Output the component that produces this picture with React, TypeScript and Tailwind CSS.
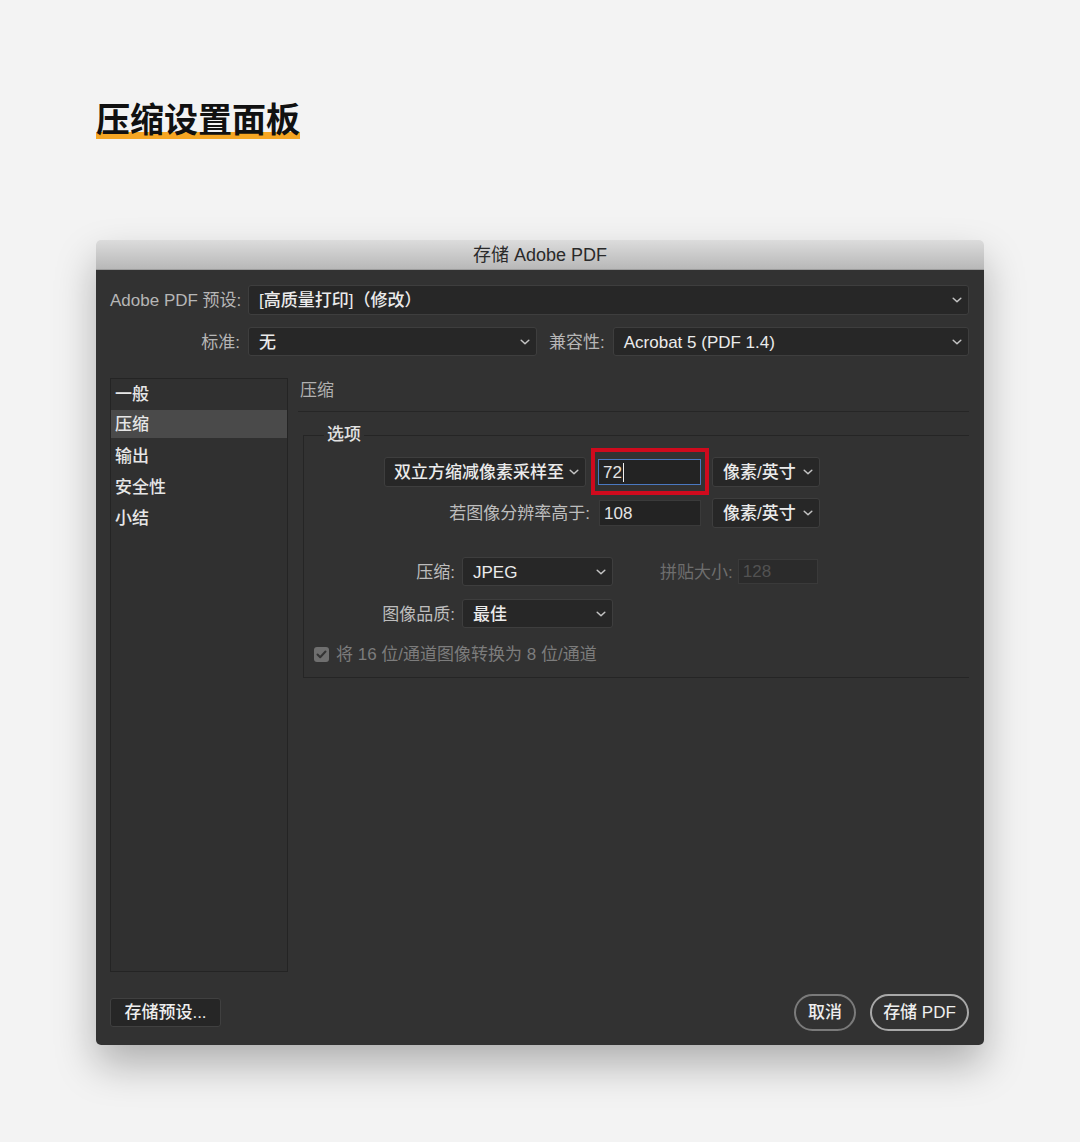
import React from "react";

const FONT = "font-['Liberation_Sans','Noto_Sans_CJK_SC',sans-serif]";

function Chevron() {
  return (
    <svg width="10" height="6" viewBox="0 0 10 6" className="shrink-0">
      <polyline points="1.2,1.2 5,4.8 8.8,1.2" fill="none" stroke="#c4c4c4" strokeWidth="1.5" strokeLinecap="round" strokeLinejoin="round" />
    </svg>
  );
}

function Select({ text, className = "", pl = "pl-[10px]" }: { text: string; className?: string; pl?: string }) {
  return (
    <div className={`flex items-center justify-between bg-[#272727] border border-[#3e3e3e] rounded-[3px] ${pl} pr-[6px] ${className}`}>
      <span className="text-[#ebebeb] font-medium whitespace-nowrap pt-[2px]">{text}</span>
      <Chevron />
    </div>
  );
}

export default function App() {
  return (
    <div className={`min-h-[1142px] w-[1080px] bg-[#f3f3f3] pl-[96px] pt-[98px] ${FONT} text-[17px]`}>
      <div className="h-[40px] leading-[40px]">
        <span className="relative inline-block font-['Noto_Sans_CJK_SC',sans-serif] text-[34px] font-bold text-[#111111]">
          <span className="absolute left-0 right-0 bottom-[-1px] h-[7px] bg-[#f6a623]" />
          <span className="relative">压缩设置面板</span>
        </span>
      </div>

      <div className="mt-[102px] w-[888px] rounded-[5px] overflow-hidden shadow-[0_20px_40px_rgba(0,0,0,0.28)]">
        <div className="h-[30px] leading-[31px] text-center text-[18px] text-[#2a2a2a] bg-[linear-gradient(to_bottom,#dcdcdc,#b8b8b8)] border-b border-[#9c9c9c]">
          存储 Adobe PDF
        </div>

        <div className="bg-[#323232] pl-[14px] pr-[15px] pt-[15px] pb-[14px]">
          <div className="flex items-center h-[30px]">
            <div className="w-[130px] text-right text-[#b6b6b6] whitespace-nowrap pt-[2px]">Adobe PDF 预设:</div>
            <Select text="[高质量打印]（修改）" className="ml-[8px] flex-1 h-[30px]" />
          </div>
          <div className="flex items-center h-[29px] mt-[12px]">
            <div className="w-[130px] text-right text-[#b6b6b6] pt-[2px]">标准:</div>
            <Select text="无" className="ml-[8px] w-[289px] h-[29px]" />
            <div className="ml-[12px] text-[#b6b6b6] whitespace-nowrap pt-[2px]">兼容性:</div>
            <Select text="Acrobat 5 (PDF 1.4)" className="ml-[8px] flex-1 h-[29px]" />
          </div>

          <div className="flex mt-[22px]">
            <div className="w-[178px] h-[594px] border border-[#242424] bg-[#303030] flex flex-col gap-[3px] text-[#e6e6e6] font-medium">
              <div className="h-[28px] leading-[28px] pt-[2px] pl-[4px]">一般</div>
              <div className="h-[28px] leading-[28px] pt-[1px] pl-[4px] bg-[#4a4a4a]">压缩</div>
              <div className="h-[28px] leading-[28px] pt-[2px] pl-[4px]">输出</div>
              <div className="h-[28px] leading-[28px] pt-[2px] pl-[4px]">安全性</div>
              <div className="h-[28px] leading-[28px] pt-[2px] pl-[4px]">小结</div>
            </div>

            <div className="flex-1 ml-[10px]">
              <div className="leading-[26px] pl-[2px] pb-[7px] border-b border-[#262626] text-[#b0b0b0]">压缩</div>

              <fieldset className="ml-[5px] mt-[13px] border-t border-l border-b border-r-0 border-[#252525] p-0 m-0 min-w-0">
                <legend className="ml-[20px] px-[3px] leading-[20px] text-[#e2e2e2] font-medium">选项</legend>
                <div className="pt-[12px] pb-[14px]">
                  <div className="flex items-center h-[30px]">
                    <div className="w-[287px] flex justify-end pr-[5px]">
                      <Select text="双立方缩减像素采样至" className="w-[202px] h-[30px]" pl="pl-[9px]" />
                    </div>
                    <div className="relative ml-[7px] w-[103px] h-[26px]">
                      <div className="w-full h-full bg-[#232323] border border-[#4a78c0] flex items-center pl-[4px] text-[#e4e4e4] pt-[1px]">
                        72<span className="inline-block w-[1px] h-[19px] bg-[#f0f0f0] ml-[1px]" />
                      </div>
                      <div className="absolute left-[-7px] right-[-8px] top-[-11px] bottom-[-10px] border-[4px] border-[#cf0a1d]" />
                    </div>
                    <Select text="像素/英寸" className="ml-[11px] w-[108px] h-[30px]" />
                  </div>

                  <div className="flex items-center h-[30px] mt-[11px]">
                    <div className="w-[287px] text-right pr-[1px] text-[#bdbdbd] pt-[2px]">若图像分辨率高于:</div>
                    <div className="ml-[8px] w-[102px] h-[26px] bg-[#232323] border border-[#3a3a3a] flex items-center pl-[4px] text-[#e4e4e4] pt-[1px]">108</div>
                    <Select text="像素/英寸" className="ml-[11px] w-[108px] h-[30px]" />
                  </div>

                  <div className="flex items-center h-[29px] mt-[29px]">
                    <div className="w-[151px] text-right text-[#bdbdbd] pt-[2px]">压缩:</div>
                    <Select text="JPEG" className="ml-[7px] w-[151px] h-[29px]" />
                    <div className="ml-[47px] text-[#6e6e6e] whitespace-nowrap pt-[2px]">拼贴大小:</div>
                    <div className="ml-[5px] w-[80px] h-[25px] bg-[#2b2b2b] border border-[#3a3a3a] flex items-center pl-[4px] text-[#525252] pt-[1px]">128</div>
                  </div>

                  <div className="flex items-center h-[29px] mt-[13px]">
                    <div className="w-[151px] text-right text-[#bdbdbd] pt-[2px]">图像品质:</div>
                    <Select text="最佳" className="ml-[7px] w-[151px] h-[29px]" />
                  </div>

                  <div className="flex items-center h-[18px] mt-[17px] pl-[10px]">
                    <div className="w-[15px] h-[15px] rounded-[3px] bg-[#6f6f6f] flex items-center justify-center">
                      <svg width="11" height="9" viewBox="0 0 11 9">
                        <polyline points="1.5,4.5 4.2,7.2 9.5,1.5" fill="none" stroke="#343434" strokeWidth="2" strokeLinecap="round" strokeLinejoin="round" />
                      </svg>
                    </div>
                    <span className="ml-[7px] text-[#7c7c7c] whitespace-nowrap pt-[2px]">将 16 位/通道图像转换为 8 位/通道</span>
                  </div>
                </div>
              </fieldset>
            </div>
          </div>

          <div className="flex items-center justify-between mt-[22px] h-[37px]">
            <div className="w-[111px] h-[29px] bg-[#262626] border border-[#404040] rounded-[3px] flex items-center justify-center text-[#eeeeee] font-medium pt-[1px]">
              存储预设...
            </div>
            <div className="flex items-center gap-[14px]">
              <div className="w-[62px] h-[37px] rounded-full border-2 border-[#7a7a7a] flex items-center justify-center text-[#eeeeee] font-medium pt-[1px]">取消</div>
              <div className="w-[99px] h-[37px] rounded-full border-2 border-[#a8a8a8] flex items-center justify-center text-[#eeeeee] font-medium pt-[1px]">存储 PDF</div>
            </div>
          </div>
        </div>
      </div>
    </div>
  );
}
